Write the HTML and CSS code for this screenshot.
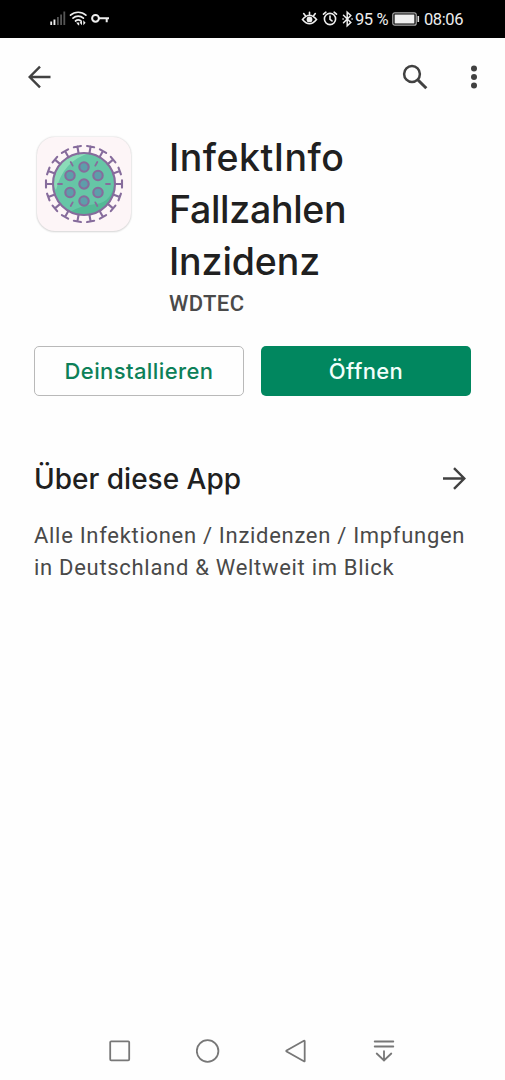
FILE: index.html
```html
<!DOCTYPE html>
<html lang="de">
<head>
<meta charset="utf-8">
<title>InfektInfo</title>
<link rel="stylesheet" href="styles.css">
</head>
<body>
<div class="status">
  <svg class="status-left" width="62" height="20" viewBox="0 0 62 20">
    <g fill="#eee"><rect x="0.3" y="12.5" width="1.8" height="3.5"/><rect x="3.5" y="10.5" width="1.9" height="5.5"/></g>
    <g fill="#555"><rect x="7" y="8" width="1.8" height="8"/><rect x="10.2" y="5.5" width="1.8" height="10.5"/><rect x="13.4" y="2.5" width="1.8" height="13.5"/></g>
    <g fill="none" stroke="#eee" stroke-width="1.7" stroke-linecap="round"><path d="M20.5 6.2a11.5 11.5 0 0 1 15.4 0M23 9.2a7.8 7.8 0 0 1 10.4 0M25.5 12a4.2 4.2 0 0 1 5.2-.2"/></g>
    <path d="M26.2 13.4h3v2.9h-1zM32 11.3v5l-2.2-2.5zM33.3 11.3v5l2.3-2.5z" fill="#eee"/>
    <g fill="none" stroke="#eee" stroke-width="2"><circle cx="45.5" cy="9.3" r="3.4"/><path d="M49 9.3h10M56.7 9.3v4"/></g>
  </svg>
  <div class="status-right">
    <svg width="54" height="20" viewBox="0 0 54 20" fill="none" stroke="#eee" stroke-width="1.6" stroke-linecap="round">
      <path d="M1.5 10.5q7-8.5 14 0q-7 8.5-14 0zM8.5 3.2v2.4M2.7 4.6l1.5 2M14.3 4.6l-1.5 2"/><circle cx="8.5" cy="10.4" r="2.1" fill="#eee"/>
      <circle cx="29" cy="10" r="5.6"/><path d="M29 7v3.3l2 1.6M22.5 5.2l2.4-2M35.5 5.2l-2.4-2"/>
      <path d="M42.5 6.2l7.3 7.3-3.6 3.3V3.2l3.6 3.3-7.3 7.3" stroke-width="1.5"/><path d="M42 10h.2M51 10h.2"/>
    </svg>
    <span class="percent">95 %</span>
    <svg class="battery" width="28" height="16" viewBox="0 0 28 16"><rect x=".8" y="1.8" width="23.4" height="12.4" rx="2" fill="none" stroke="#aaa" stroke-width="1.2"/><rect x="2.6" y="3.5" width="19.8" height="9" fill="#eee"/><path d="M26.3 5v6" stroke="#ddd" stroke-width="1.6"/></svg>
    <span class="time">08:06</span>
  </div>
</div>
<header class="toolbar">
  <svg width="24" height="24" viewBox="0 0 24 24" fill="none" stroke="#414141" stroke-width="2.4"><path d="M23.5 12H2.8M13 1.7L2.7 12 13 22.3"/></svg>
  <svg class="search" width="26" height="26" viewBox="0 0 26 26" fill="none" stroke="#414141"><circle cx="10" cy="10" r="7.9" stroke-width="2.5"/><path d="M16 16l8.3 8.3" stroke-width="3"/></svg>
  <svg width="8" height="24" viewBox="0 0 8 24" fill="#414141"><circle cx="4" cy="3.5" r="3"/><circle cx="4" cy="12" r="3"/><circle cx="4" cy="20.5" r="3"/></svg>
</header>
<main>
  <section class="app">
    <div class="app-icon">
      <svg width="94" height="94" viewBox="-47 -47 94 94">
        <defs>
          <g id="spike"><path d="M0-31v-7M-3.6-38h7.2"/></g>
          <g id="pair"><use href="#spike" transform="rotate(10)"/><use href="#spike" transform="rotate(-10)"/></g>
          <clipPath id="body"><circle r="31"/></clipPath>
        </defs>
        <circle r="31" fill="#66c6a6"/>
        <g clip-path="url(#body)"><path d="M-32 0A32 32 0 0 1 0-32h10Q-20-26-28 6z" fill="#8bdcb8"/><path d="M31-5Q29 18 12 20T-14 28L0 34 34 30z" fill="#54b895"/></g>
        <g fill="none" stroke="#866c9c" stroke-width="2.1" stroke-linecap="round">
          <circle r="31"/>
          <use href="#pair"/><use href="#pair" transform="rotate(40)"/><use href="#pair" transform="rotate(80)"/><use href="#pair" transform="rotate(120)"/><use href="#pair" transform="rotate(160)"/><use href="#pair" transform="rotate(200)"/><use href="#pair" transform="rotate(240)"/><use href="#pair" transform="rotate(280)"/><use href="#pair" transform="rotate(320)"/>
          <g fill="#5e9daa"><circle r="4.7"/><circle cy="-17" r="4.7"/><circle cy="17" r="4.7"/><circle cx="-14" cy="-8.5" r="4.7"/><circle cx="14" cy="-8.5" r="4.7"/><circle cx="-14" cy="8.5" r="4.7"/><circle cx="14" cy="8.5" r="4.7"/></g>
          <path stroke-width="1.8" d="M-26 0h4M22 0h4M-13.3-22l2 3.6M13.3-22l-2 3.6M-13.3 22l2-3.6M13.3 22l-2-3.6"/>
        </g>
      </svg>
    </div>
    <div class="app-text">
      <h1><span class="t1">InfektInfo</span><br><span class="t2">Fallzahlen</span><br><span class="t3">Inzidenz</span></h1>
      <p class="dev">WDTEC</p>
    </div>
  </section>
  <div class="buttons">
    <button class="btn outline">Deinstallieren</button>
    <button class="btn filled">Öffnen</button>
  </div>
  <section class="about">
    <div class="about-head">
      <h2>Über diese App</h2>
      <svg width="24" height="24" viewBox="0 0 24 24" fill="none" stroke="#414141" stroke-width="2.4"><path d="M0 11.5h21.3M11 1.2l10.3 10.3L11 21.8"/></svg>
    </div>
    <p class="desc">Alle Infektionen / Inzidenzen / Impfungen<br>in Deutschland &amp; Weltweit im Blick</p>
  </section>
</main>
<nav class="navbar">
  <svg width="24" height="26" viewBox="0 0 24 26"><rect x="2.2" y="3.3" width="19" height="19" rx="1"/></svg>
  <svg width="24" height="26" viewBox="0 0 24 26"><circle cx="11.6" cy="13" r="10.8"/></svg>
  <svg width="24" height="26" viewBox="0 0 24 26"><path d="M20.7 3.3v19.6q0 .8-.8.4L2.6 13.5q-.7-.5 0-1L19.9 2.8q.8-.4.8.5z"/></svg>
  <svg width="24" height="26" viewBox="0 0 24 26"><path d="M2.7 3.5h18.6M2.7 8.5h18.6M12 13.2v9M4.7 15.5l7.3 7 7.3-7"/></svg>
</nav>
</body>
</html>
```
FILE: styles.css
```css
* { box-sizing: border-box; }
body { margin: 0; width: 505px; height: 1080px; background: #fefefe; display: flex; flex-direction: column; font-family: Roboto, sans-serif; overflow: hidden; }
h1, h2, p { margin: 0; }
svg { display: block; flex: none; }
.status { height: 38px; background: #000; color: #eee; display: flex; align-items: center; justify-content: space-between; padding: 0 42px 0 50px; font-size: 17px; }
.status-right { display: flex; align-items: center; white-space: nowrap; }
.percent { width: 35px; font-size: 16.5px; letter-spacing: -0.4px; }
.battery { margin-left: 2px; }
.time { width: 39px; margin-left: 4px; font-size: 16.5px; letter-spacing: -0.4px; }
.toolbar { height: 78px; display: flex; align-items: center; padding: 0 27px; }
.search { margin-left: auto; margin-right: 42px; }
main { flex: 1; padding: 16px 34px 0; }
.app { display: flex; height: 214px; }
.app-icon { width: 94px; height: 94px; margin: 5px 0 0 3px; border-radius: 18px; background: #fdf5f7; box-shadow: 0 0 2px #ccc, 0 1px 2px #ddd; }
.app-text { margin-left: 38px; }
h1 { font: 450 37.5px/52px Inter, sans-serif; color: #202020; white-space: nowrap; }
.t1 { letter-spacing: 0.5px; }
.t2 { letter-spacing: -0.3px; }
.t3 { letter-spacing: -0.1px; }
.dev { font-weight: 500; font-size: 22px; line-height: 32px; color: #4a4a4a; letter-spacing: 0.4px; }
.buttons { display: flex; gap: 17px; }
.btn { width: 210px; height: 50px; border-radius: 5px; font: 500 22px/48px Inter, sans-serif; padding: 0; letter-spacing: 0.4px; }
.outline { background: #fefefe; border: 1px solid #b9b9b9; color: #0c8058; }
.filled { background: #01875f; border: 0; color: #f2fffb; }
.about { padding-top: 64px; }
.about-head { display: flex; justify-content: space-between; align-items: center; height: 38px; padding-right: 4px; }
h2 { font: 500 28px/38px Inter, sans-serif; color: #202020; }
.desc { margin-top: 22px; font-size: 22px; line-height: 32px; color: #494949; white-space: nowrap; letter-spacing: 0.7px; }
.navbar { height: 58px; display: flex; justify-content: space-between; padding: 0 109px 0 108px; align-items: center; }
.navbar svg { fill: none; stroke: #777; stroke-width: 1.8; stroke-linecap: round; }
```
